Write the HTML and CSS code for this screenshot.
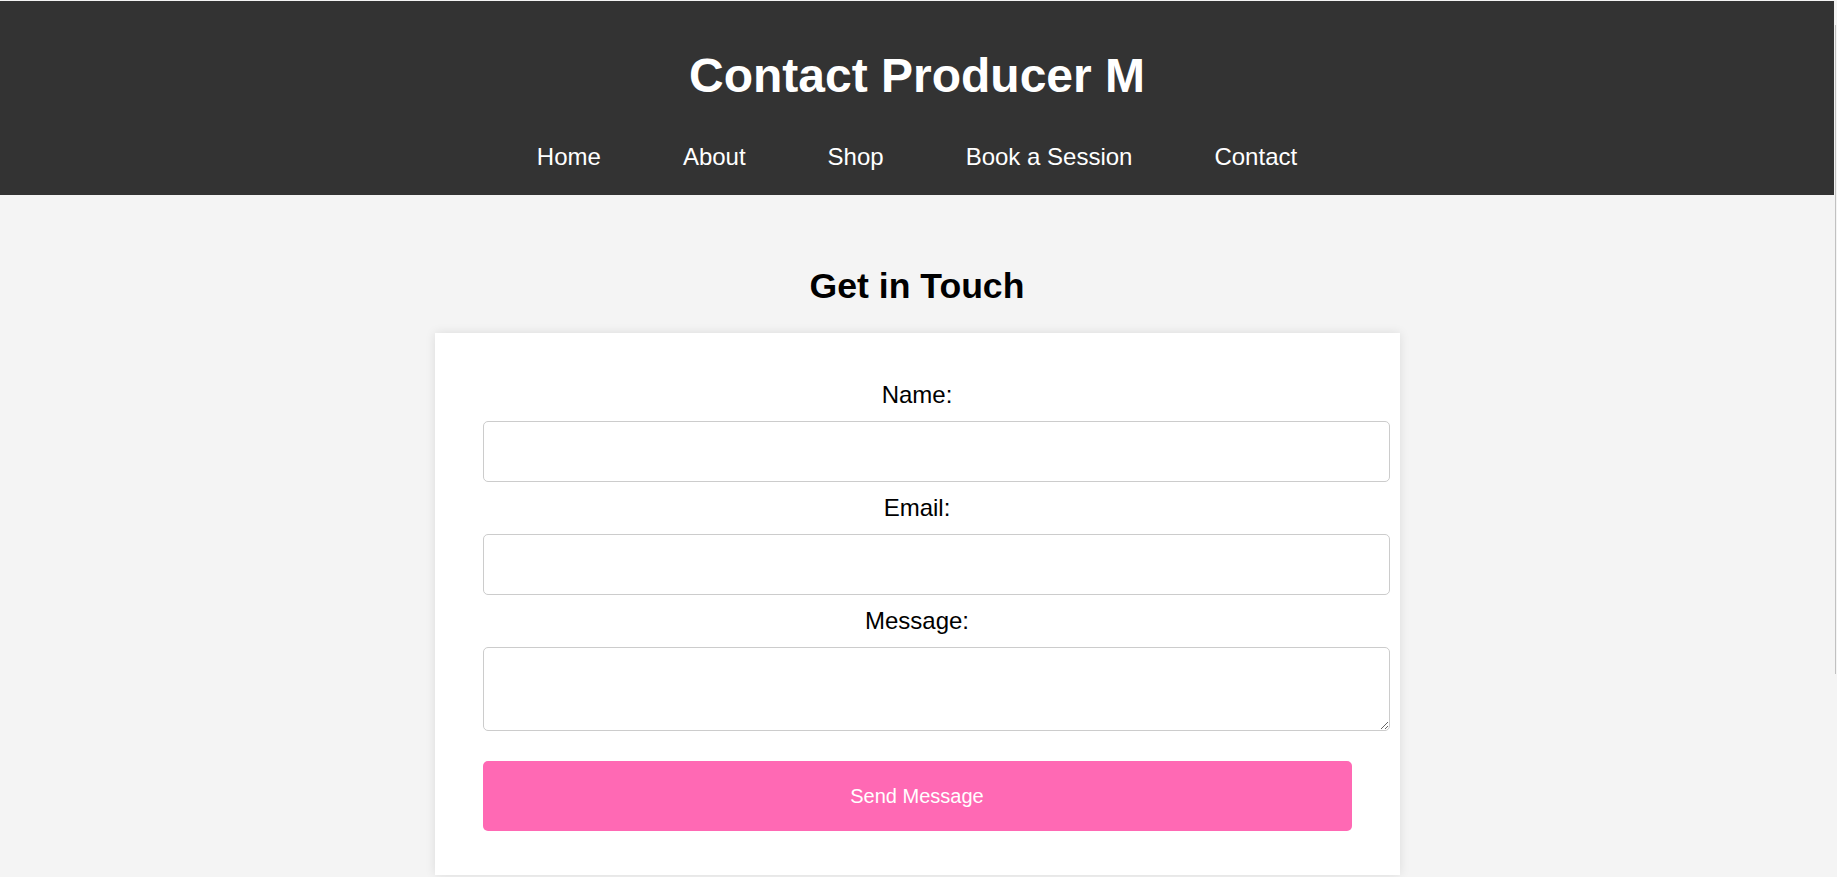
FILE: index.html
```html
<!DOCTYPE html>
<html lang="en">
<head>
<meta charset="utf-8">
<title>Contact Producer M</title>
<link rel="stylesheet" href="styles.css">
</head>
<body>
<header class="site-header">
  <h1 class="site-title">Contact Producer M</h1>
  <nav class="site-nav">
    <a href="#">Home</a>
    <a href="#">About</a>
    <a href="#">Shop</a>
    <a href="#">Book a Session</a>
    <a href="#">Contact</a>
  </nav>
</header>
<main class="content">
  <h2 class="section-title">Get in Touch</h2>
  <form class="contact-card">
    <label class="field-label" for="name">Name:</label>
    <input class="field-input" type="text" id="name">
    <label class="field-label" for="email">Email:</label>
    <input class="field-input" type="email" id="email">
    <label class="field-label" for="message">Message:</label>
    <textarea class="field-area" id="message"></textarea>
    <button class="send-btn" type="button">Send Message</button>
  </form>
</main>
<div class="scroll-thumb" aria-hidden="true"></div>
</body>
</html>
```
FILE: styles.css
```css
html {
  background: #f4f4f4;
}
body {
  margin: 0 3px 0 0;
  padding-top: 1px;
  background: #f4f4f4;
  font-family: "Liberation Sans", Arial, sans-serif;
  color: #000;
}
.scroll-thumb {
  position: fixed;
  top: 25px;
  right: 1px;
  width: 1px;
  height: 649px;
  background: #c1c1c1;
}
.site-header {
  background: #333;
  color: #fff;
  text-align: center;
  padding: 48px 0 25px;
}
.site-title {
  margin: 0;
  font-size: 48px;
  line-height: 54px;
  font-weight: 700;
}
.site-nav {
  margin-top: 40px;
  display: flex;
  justify-content: center;
  gap: 82px;
  font-size: 24px;
  line-height: 27px;
}
.site-nav a {
  color: #fff;
  text-decoration: none;
}
.content {
  padding-bottom: 240px;
}
.section-title {
  margin: 72px 0 27px;
  text-align: center;
  font-size: 35.6px;
  line-height: 39px;
  font-weight: 700;
}
.contact-card {
  box-sizing: border-box;
  width: 965px;
  margin: 0 auto;
  background: #fff;
  padding: 48px 48px 44px;
  box-shadow: 0 0 10px rgba(0, 0, 0, 0.1);
}
.field-label {
  display: block;
  text-align: center;
  font-size: 24px;
  line-height: 27px;
  margin-bottom: 13px;
}
.field-input,
.field-area {
  display: block;
  box-sizing: content-box;
  width: 100%;
  padding: 18px;
  border: 1px solid #ccc;
  border-radius: 5px;
  background: #fff;
  font-family: "Liberation Sans", Arial, sans-serif;
  font-size: 20px;
  margin: 0 0 12px;
}
.field-input {
  height: 23px;
}
.field-area {
  height: 46px;
  margin-bottom: 30px;
}
.send-btn {
  display: block;
  width: 100%;
  height: 70px;
  border: none;
  border-radius: 5px;
  background: #ff69b4;
  color: #fff;
  font-family: "Liberation Sans", Arial, sans-serif;
  font-size: 20px;
}
```
